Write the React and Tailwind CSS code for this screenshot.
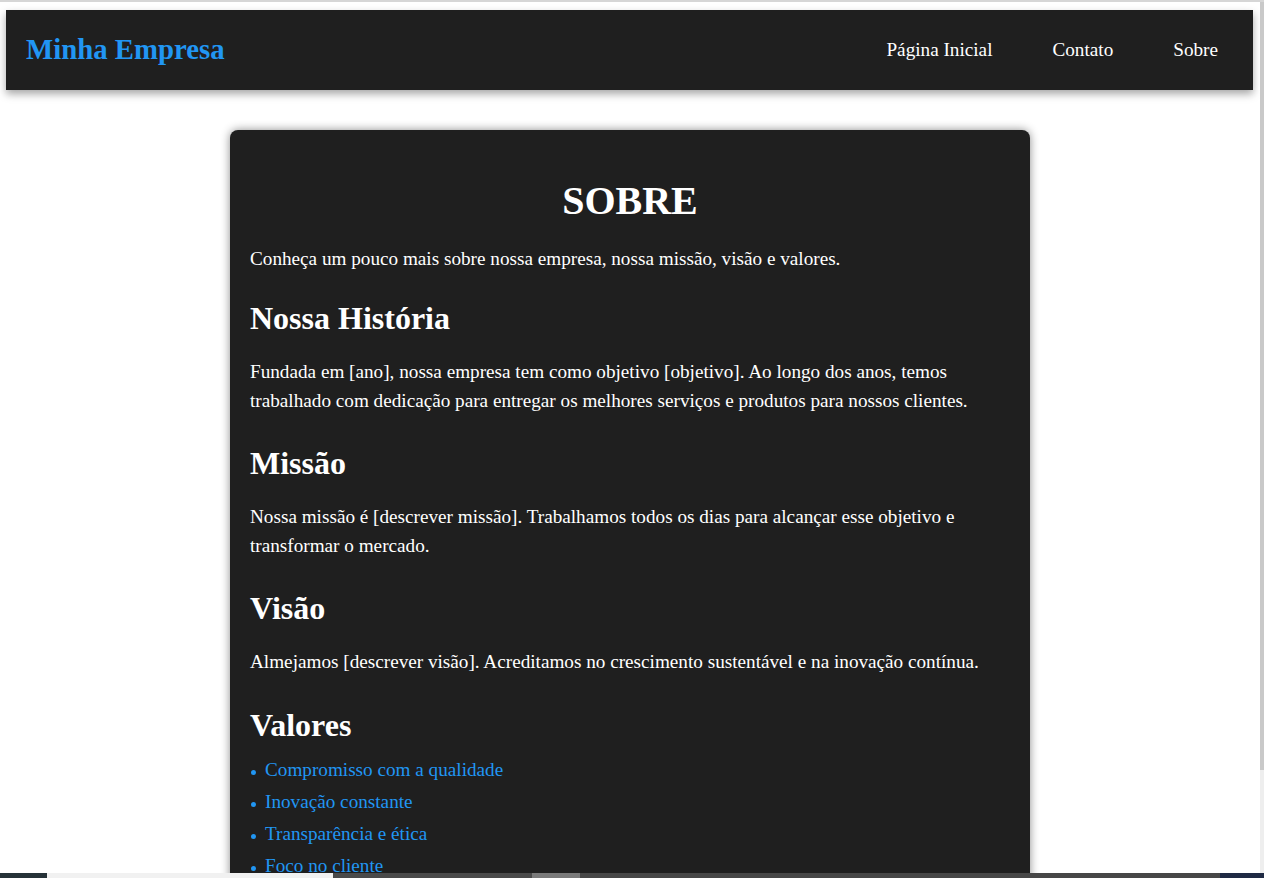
const serif = { fontFamily: '"Liberation Serif", "Times New Roman", serif' }

const sections = [
  {
    title: 'Nossa História',
    text: 'Fundada em [ano], nossa empresa tem como objetivo [objetivo]. Ao longo dos anos, temos trabalhado com dedicação para entregar os melhores serviços e produtos para nossos clientes.',
    mt: 'mt-[26px]',
  },
  {
    title: 'Missão',
    text: 'Nossa missão é [descrever missão]. Trabalhamos todos os dias para alcançar esse objetivo e transformar o mercado.',
    mt: 'mt-[30px]',
  },
  {
    title: 'Visão',
    text: 'Almejamos [descrever visão]. Acreditamos no crescimento sustentável e na inovação contínua.',
    mt: 'mt-[29px]',
  },
]

const valores = ['Compromisso com a qualidade', 'Inovação constante', 'Transparência e ética', 'Foco no cliente']

export default function App() {
  return (
    <div
      className="h-[878px] overflow-hidden flex flex-col bg-white border-t-2 border-[#d6d6d6]"
      style={serif}
    >
      <div className="flex flex-1 min-h-0">
        <div className="flex-1 min-w-0 overflow-hidden pt-[8px]">
          <Header />
          <main className="w-[800px] mx-auto mt-[40px] rounded-lg bg-[#1f1f1f] px-[20px] pt-[20px] pb-[20px] shadow-[0_0_10px_rgba(0,0,0,0.45)]">
            <h1 className="text-[40px] font-bold leading-[46px] text-white text-center mt-[28px] mb-[21px]">SOBRE</h1>
            <p className="text-[19.2px] leading-[28.8px] text-white">
              Conheça um pouco mais sobre nossa empresa, nossa missão, visão e valores.
            </p>

            {sections.map((s) => (
              <section key={s.title}>
                <h2 className={`text-[32px] font-bold leading-[37px] text-white mb-[21px] ${s.mt}`}>
                  {s.title}
                </h2>
                <p className="text-[19.2px] leading-[28.8px] text-white">{s.text}</p>
              </section>
            ))}

            <section>
              <h2 className="text-[32px] font-bold leading-[37px] text-white mt-[30px]">Valores</h2>
              <ul className="mt-[10px]">
                {valores.map((v) => (
                  <li key={v} className="flex items-center h-[32px] text-[19.2px] leading-[32px] text-[#2196f3]">
                    <span className="ml-[1px] mt-[6px] w-[5px] h-[5px] rounded-full bg-[#2196f3]" />
                    <span className="ml-[9px]">{v}</span>
                  </li>
                ))}
              </ul>
            </section>
          </main>
        </div>

        {/* scrollbar */}
        <div className="w-[4px] flex flex-col">
          <div className="h-[768px] bg-[#c9c9c9]" />
          <div className="flex-1 bg-[#eeeeee]" />
        </div>
      </div>

      {/* taskbar strip */}
      <div className="h-[5px] flex">
        <div className="w-[47px] bg-[#263238]" />
        <div className="w-[286px] bg-[#f1f1f1]" />
        <div className="w-[199px] bg-[#4a4a4a]" />
        <div className="w-[48px] bg-[#7a7a7a]" />
        <div className="flex-1 bg-[#474747]" />
        <div className="w-[44px] bg-[#1f2a44]" />
      </div>
    </div>
  )
}

function Header() {
  return (
    <header className="ml-[6px] mr-[7px] h-[80px] flex items-center justify-between bg-[#1f1f1f] pl-[20px] pr-[35px] shadow-[0_4px_8px_rgba(0,0,0,0.35)]">
      <span className="text-[28.8px] font-bold text-[#2196f3]">Minha Empresa</span>
      <nav className="flex gap-[60px] text-[19.2px] text-white">
        <a href="#">Página Inicial</a>
        <a href="#">Contato</a>
        <a href="#">Sobre</a>
      </nav>
    </header>
  )
}
